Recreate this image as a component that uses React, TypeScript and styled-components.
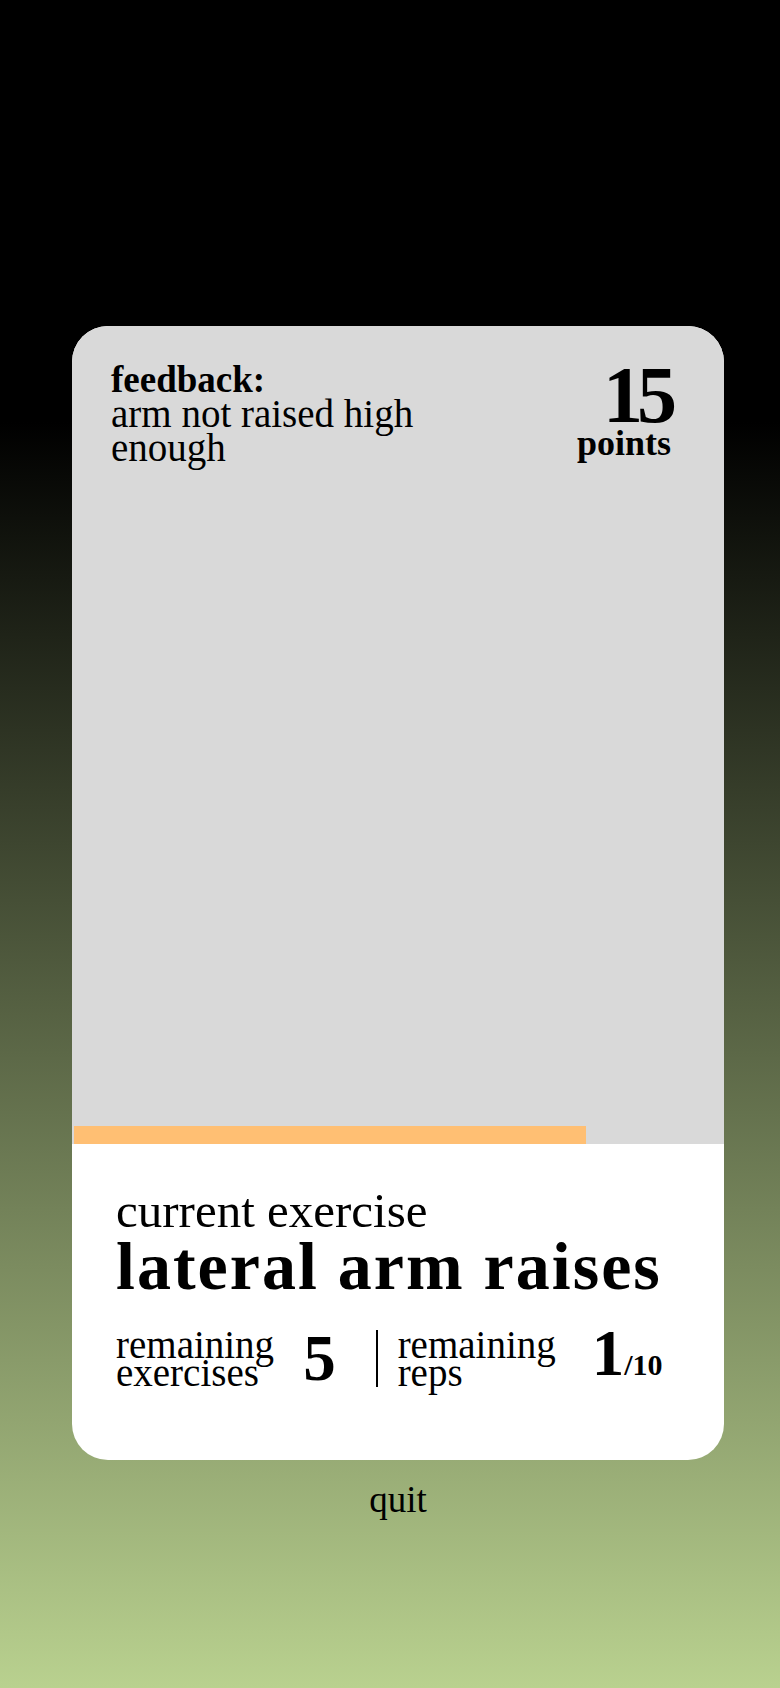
import React from "react";
import styled, { createGlobalStyle } from "styled-components";

const GlobalStyle = createGlobalStyle`
  html, body {
    margin: 0;
    padding: 0;
  }
  body {
    font-family: "Liberation Serif", "Times New Roman", serif;
    color: #000;
  }
  * {
    box-sizing: border-box;
  }
`;

const Page = styled.div`
  min-height: 1688px;
  background: linear-gradient(180deg, #000 0%, #000 25%, #b9d18f 100%);
  padding: 326px 0 0 72px;
  display: flex;
  flex-direction: column;
  align-items: flex-start;
`;

const Column = styled.div`
  width: 652px;
  display: flex;
  flex-direction: column;
  align-items: center;
`;

const Card = styled.section`
  width: 100%;
  border-radius: 36px;
  overflow: hidden;
  background: #fff;
  display: flex;
  flex-direction: column;
`;

const CameraView = styled.div`
  height: 818px;
  background: #d9d9d9;
  display: flex;
  flex-direction: column;
  justify-content: space-between;
`;

const Header = styled.header`
  display: flex;
  justify-content: space-between;
  align-items: flex-start;
  padding: 37px 53px 0 39px;
`;

const Feedback = styled.div`
  max-width: 330px;
  font-size: 39px;
  line-height: 34px;
`;

const FeedbackTitle = styled.span`
  display: block;
  font-size: 37px;
  font-weight: 700;
`;

const Score = styled.div`
  margin-top: 5px;
  display: flex;
  flex-direction: column;
  align-items: flex-end;
`;

const ScoreValue = styled.span`
  font-size: 80px;
  font-weight: 700;
  line-height: 54px;
  letter-spacing: -6px;
`;

const ScoreUnit = styled.span`
  margin-top: 10px;
  font-size: 36px;
  font-weight: 700;
  line-height: 22px;
`;

const ProgressTrack = styled.div`
  height: 18px;
  padding: 0 2px;
`;

const ProgressFill = styled.div`
  height: 100%;
  background: #ffbf73;
`;

const Info = styled.div`
  height: 316px;
  padding: 42px 44px 0 44px;
  display: flex;
  flex-direction: column;
`;

const InfoLabel = styled.div`
  font-size: 49px;
  line-height: 50px;
`;

const ExerciseTitle = styled.h1`
  margin: 0;
  font-size: 68px;
  font-weight: 700;
  line-height: 60px;
  letter-spacing: 2px;
  white-space: nowrap;
`;

const StatsRow = styled.div`
  margin-top: 34px;
  height: 57px;
  display: flex;
  align-items: center;
`;

const StatGroup = styled.div<{ $gap: number }>`
  display: flex;
  align-items: center;
  gap: ${(p) => p.$gap}px;
`;

const StatLabel = styled.div`
  min-width: 157px;
  font-size: 39px;
  line-height: 28px;
`;

const StatValue = styled.div`
  font-size: 65px;
  font-weight: 700;
  line-height: 65px;
  white-space: nowrap;
`;

const StatTotal = styled.span`
  font-size: 30px;
`;

const Divider = styled.div`
  width: 2px;
  align-self: stretch;
  background: #000;
  margin: 0 20px 0 40px;
`;

const QuitButton = styled.button`
  margin-top: 20px;
  padding: 0;
  border: none;
  background: none;
  font-family: inherit;
  font-size: 37px;
  line-height: 40px;
  color: #000;
  cursor: pointer;
`;

const progress = 0.79;

export default function App() {
  return (
    <>
      <GlobalStyle />
      <Page>
        <Column>
          <Card>
            <CameraView>
              <Header>
                <Feedback>
                  <FeedbackTitle>feedback:</FeedbackTitle>
                  arm not raised high enough
                </Feedback>
                <Score>
                  <ScoreValue>15</ScoreValue>
                  <ScoreUnit>points</ScoreUnit>
                </Score>
              </Header>
              <ProgressTrack>
                <ProgressFill style={{ width: `${progress * 100}%` }} />
              </ProgressTrack>
            </CameraView>
            <Info>
              <InfoLabel>current exercise</InfoLabel>
              <ExerciseTitle>lateral arm raises</ExerciseTitle>
              <StatsRow>
                <StatGroup $gap={29}>
                  <StatLabel>
                    remaining
                    <br />
                    exercises
                  </StatLabel>
                  <StatValue>5</StatValue>
                </StatGroup>
                <Divider />
                <StatGroup $gap={36}>
                  <StatLabel>
                    remaining
                    <br />
                    reps
                  </StatLabel>
                  <StatValue>
                    1<StatTotal>/10</StatTotal>
                  </StatValue>
                </StatGroup>
              </StatsRow>
            </Info>
          </Card>
          <QuitButton>quit</QuitButton>
        </Column>
      </Page>
    </>
  );
}
